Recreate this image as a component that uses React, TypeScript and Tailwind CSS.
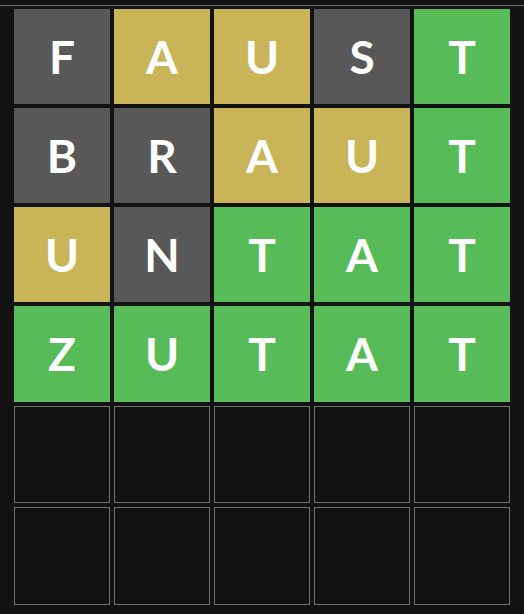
const GRAY = "bg-[#585858]";
const YELLOW = "bg-[#c9b458]";
const GREEN = "bg-[#57bb57]";

type Cell = { ch: string; c: "g" | "y" | "x" };

const rows: Cell[][] = [
  [
    { ch: "F", c: "x" },
    { ch: "A", c: "y" },
    { ch: "U", c: "y" },
    { ch: "S", c: "x" },
    { ch: "T", c: "g" },
  ],
  [
    { ch: "B", c: "x" },
    { ch: "R", c: "x" },
    { ch: "A", c: "y" },
    { ch: "U", c: "y" },
    { ch: "T", c: "g" },
  ],
  [
    { ch: "U", c: "y" },
    { ch: "N", c: "x" },
    { ch: "T", c: "g" },
    { ch: "A", c: "g" },
    { ch: "T", c: "g" },
  ],
  [
    { ch: "Z", c: "g" },
    { ch: "U", c: "g" },
    { ch: "T", c: "g" },
    { ch: "A", c: "g" },
    { ch: "T", c: "g" },
  ],
];

const bg = { g: GREEN, y: YELLOW, x: GRAY };

export default function App() {
  return (
    <div className="w-[524px] h-[614px] bg-[#121212] overflow-hidden">
      <div className="h-[5px]" />
      <div className="h-px bg-[#6e6e6e]" />
      <div className="pt-[3px] px-[14px]">
        <div className="grid grid-cols-[repeat(5,96px)] grid-rows-[95px_95px_95px_96px_97px_98px] gap-[4px]">
          {rows.map((row, r) =>
            row.map((cell, i) => (
              <div
                key={`${r}-${i}`}
                className={`${bg[cell.c]} flex items-center justify-center text-white text-[46px] font-bold leading-none font-['Lato',sans-serif]`}
              >
                {cell.ch}
              </div>
            ))
          )}
          {Array.from({ length: 10 }).map((_, i) => (
            <div key={`e-${i}`} className="border border-[#6e6e6e] bg-[#121212]" />
          ))}
        </div>
      </div>
    </div>
  );
}
